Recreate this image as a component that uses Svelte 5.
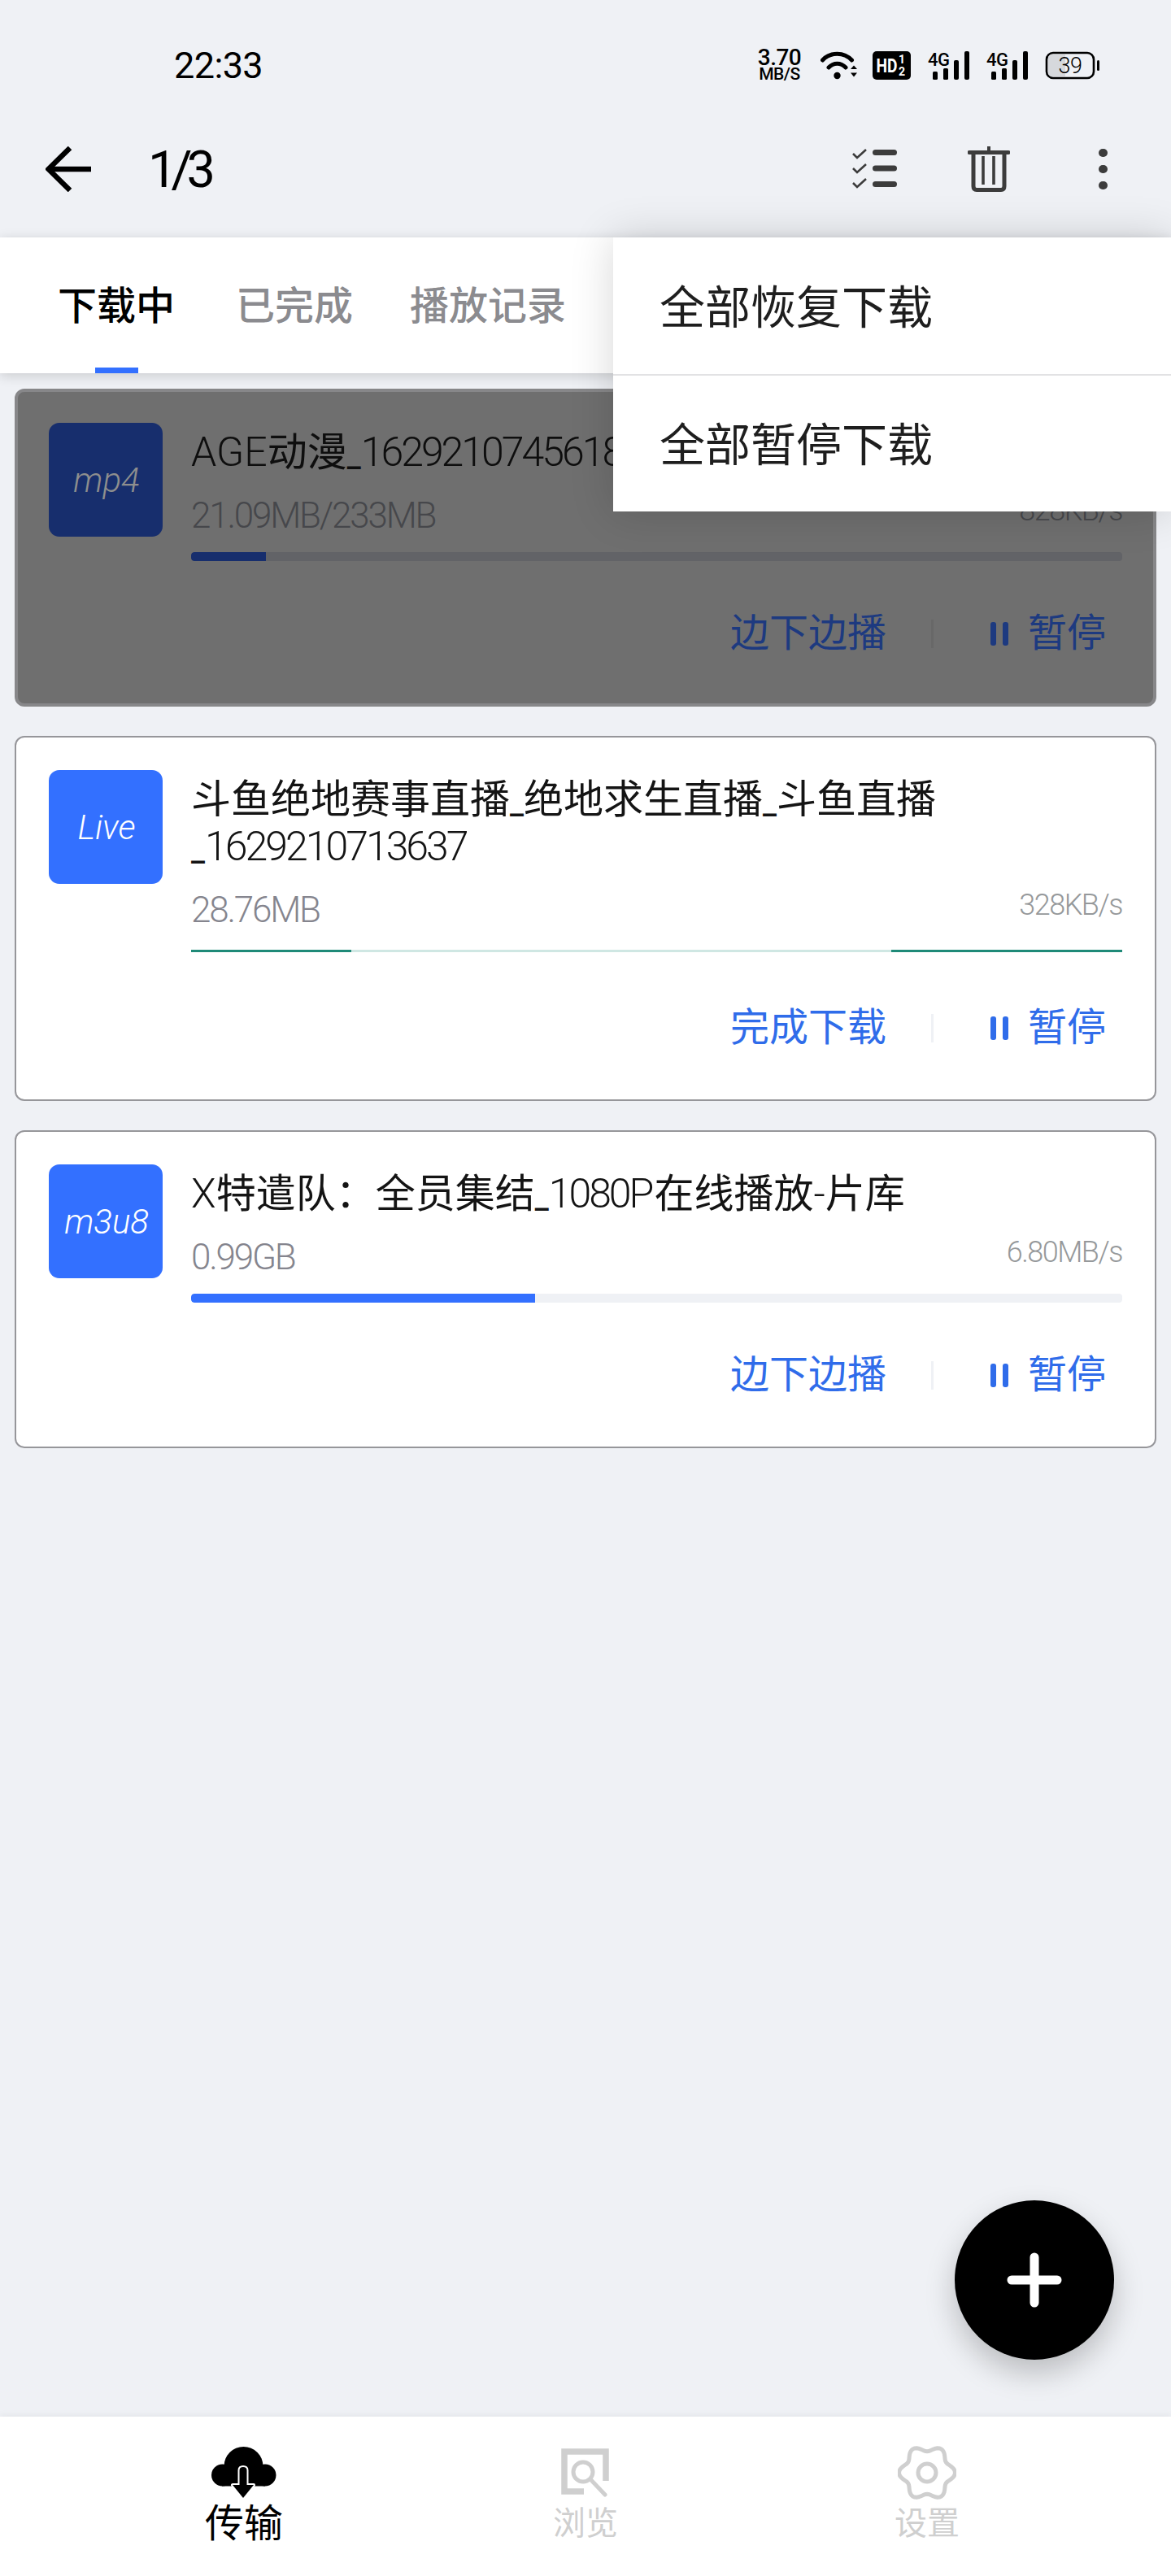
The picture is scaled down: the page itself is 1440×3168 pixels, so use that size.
<script>
  const cards = [
    { ext: 'mp4', pressed: true, size: '21.09MB/233MB', speed: '828KB/s', pct: 8, action: '边下边播',
      title: [['lat','AGE'],['cjk','动漫'],['us','_'],['num','1629210745618']] },
    { ext: 'Live', live: true, size: '28.76MB', speed: '328KB/s', action: '完成下载',
      title: [['cjk','斗鱼绝地赛事直播'],['us','_'],['cjk','绝地求生直播'],['us','_'],['cjk','斗鱼直播'],['us','_'],['num','1629210713637']] },
    { ext: 'm3u8', size: '0.99GB', speed: '6.80MB/s', pct: 36.9, action: '边下边播',
      title: [['lat','X'],['cjk','特遣队：全员集结'],['us','_'],['num','1080'],['lat','P'],['cjk','在线播放'],['lat','-'],['cjk','片库']] }
  ];
  const tabs = ['下载中', '已完成', '播放记录'];

  function gear() {
    let d = '';
    for (let i = 0; i < 96; i++) {
      const a = (i / 96) * Math.PI * 2;
      const r = 30 + 3.8 * Math.cos(6 * a);
      d += (i ? 'L' : 'M') + (36 + r * Math.cos(a) * 1.02).toFixed(2) + ' ' + (34 + r * Math.sin(a)).toFixed(2);
    }
    return d + 'Z';
  }
  const gearPath = gear();
</script>

<div class="page">
  <header class="status">
    <span class="time">22:33</span>
    <div class="indicators">
      <div class="speed"><span class="sp-n">3.70</span><span class="sp-u">MB/S</span></div>
      <svg class="wifi" width="46" height="35" viewBox="0 0 46 35" fill="none" stroke="#000">
        <path d="M2.5 11C12 0.5 29 0.5 38.5 11" stroke-width="5" stroke-linecap="round"/>
        <path d="M10 20C16 13.5 25 13.5 31 20" stroke-width="5" stroke-linecap="round"/>
        <circle cx="20.5" cy="30" r="4.2" fill="#000" stroke="none"/>
        <path d="M37 22L41 17.5L45 22ZM37 26.5H45L41 31.5Z" fill="#000" stroke="none"/>
      </svg>
      <svg class="hd" width="47" height="35" viewBox="0 0 47 35">
        <rect width="47" height="35" rx="5" fill="#000"/>
        <text x="4.5" y="26" font-size="24" font-weight="700" fill="#fff" textLength="26" lengthAdjust="spacingAndGlyphs">HD</text>
        <text x="32" y="15" font-size="14" font-weight="700" fill="#fff">1</text>
        <text x="32" y="30" font-size="14" font-weight="700" fill="#fff">2</text>
      </svg>
      {#each [0, 1] as s (s)}
        <svg class="sig" width="51" height="35" viewBox="0 0 51 35">
          <text x="0" y="17.5" font-size="22" font-weight="500" fill="#000" letter-spacing="-.5">4G</text>
          <rect x="6" y="25" width="6" height="10" rx="1.5"/>
          <rect x="19" y="21" width="6" height="14" rx="1.5"/>
          <rect x="32" y="11" width="6" height="24" rx="2"/>
          <rect x="45" y="0" width="6" height="35" rx="2"/>
        </svg>
      {/each}
      <svg class="batt" width="67" height="35" viewBox="0 0 67 35">
        <rect x="2" y="2" width="58" height="31" rx="8" fill="none" stroke="#000" stroke-width="2.6"/>
        <path d="M9 4H25V31H9Q4 31 4 26V9Q4 4 9 4Z" fill="#d6d8dc"/>
        <rect x="64" y="11" width="3" height="13" rx="1.5"/>
        <text x="31" y="27" font-size="27" font-weight="300" fill="#000" text-anchor="middle" letter-spacing="-.5">39</text>
      </svg>
    </div>
  </header>

  <div class="toolbar">
    <svg class="back" width="56" height="56" viewBox="0 0 56 56" fill="none" stroke="#000" stroke-width="6.5">
      <path d="M56 28H4"/><path d="M30 2L3.5 28L30 54"/>
    </svg>
    <h1>1/3</h1>
    <div class="tools">
      <svg class="list" width="55" height="50" viewBox="0 0 55 50" fill="none" stroke="#3c3c3c" stroke-width="2.6">
        <path d="M1 6L6 11L17 1"/><path d="M1 24L6 29L17 19"/><path d="M1 42L6 47L17 37"/>
        <g fill="#3c3c3c" stroke="none">
          <rect x="25" y="1" width="30" height="7" rx="3.5"/><rect x="25" y="20.5" width="30" height="7" rx="3.5"/><rect x="25" y="40" width="30" height="7" rx="3.5"/>
        </g>
      </svg>
      <svg class="trash" width="52" height="56" viewBox="0 0 52 56" fill="none" stroke="#3c3c3c">
        <path d="M26 0V6" stroke-width="4"/>
        <path d="M2 7.5H50" stroke-width="5" stroke-linecap="round"/>
        <path d="M7 8V49Q7 53.5 11 53.5H41Q45 53.5 45 49V8" stroke-width="5"/>
        <path d="M19 12V47M32 12V47" stroke-width="3.6"/>
      </svg>
      <div class="dots"><i></i><i></i><i></i></div>
    </div>
  </div>

  <nav class="tabs">
    {#each tabs as t, i (t)}
      <span class="tab" class:on={i === 0}>{t}</span>
    {/each}
  </nav>

  <main class="list-wrap">
    {#each cards as c (c.ext)}
      <article class="card" class:pressed={c.pressed}>
        <div class="thumb">{c.ext}</div>
        <div class="body">
          <div class="title">
            {#each c.title as [k, v]}<span class={k}>{v}</span>{/each}
          </div>
          <div class="meta">
            <span class="size">{c.size}</span>
            <span class="rate">{c.speed}</span>
          </div>
          {#if c.live}
            <div class="track live"><i class="l"></i><i class="r"></i></div>
          {:else}
            <div class="track"><i style="width:{c.pct}%"></i></div>
          {/if}
          <div class="actions">
            <span class="act">{c.action}</span>
            <span class="sep"></span>
            <svg width="22" height="29" viewBox="0 0 22 29" fill="currentColor" class="pause"><rect width="7" height="29" rx="3"/><rect x="15" width="7" height="29" rx="3"/></svg>
            <span class="act">暂停</span>
          </div>
        </div>
      </article>
    {/each}
  </main>

  <footer class="nav">
    <div class="item on">
      <svg width="80" height="64" viewBox="0 0 80 64">
        <circle cx="39.5" cy="24" r="24"/><circle cx="13.5" cy="35" r="13.5"/><circle cx="66" cy="35" r="13.5"/>
        <rect x="13" y="22" width="53" height="26.5"/>
        <path d="M34.5 29Q34.5 25 39 25Q43.5 25 43.5 29V47H52L39 63L26 47H34.5Z" stroke="#fff" stroke-width="4" stroke-linejoin="round" paint-order="stroke"/>
      </svg>
      <span>传输</span>
    </div>
    <div class="item">
      <svg width="60" height="60" viewBox="0 0 60 60" fill="none" stroke="#cfcfcf">
        <path d="M28 53H4V4H55V40" stroke-width="7.5"/>
        <circle cx="27" cy="29" r="12" stroke-width="5"/>
        <path d="M36 38L54 57" stroke-width="5" stroke-linecap="round"/>
      </svg>
      <span>浏览</span>
    </div>
    <div class="item">
      <svg width="72" height="68" viewBox="0 0 72 68" fill="none" stroke="#cfcfcf" stroke-width="5">
        <path d={gearPath} stroke-linejoin="round"/>
        <circle cx="36" cy="34" r="11"/>
      </svg>
      <span>设置</span>
    </div>
  </footer>

  <button class="fab" aria-label="add">
    <svg width="68" height="68" viewBox="0 0 68 68" stroke="#fff" stroke-width="11" stroke-linecap="round"><path d="M6 34H62M34 6V62"/></svg>
  </button>

  <ul class="menu">
    <li>全部恢复下载</li>
    <li>全部暂停下载</li>
  </ul>
</div>

<style>
  :global(body) { margin: 0; background: #eff1f5; }
  .page {
    position: relative; width: 1440px; height: 3168px; display: flex; flex-direction: column;
    background: #eff1f5; overflow: hidden;
    font-family: Roboto, "Noto Sans CJK SC", sans-serif; color: #000;
  }
  svg text { font-family: Roboto, sans-serif; }
  .sig { overflow: visible; }
  .status { height: 160px; display: flex; align-items: center; padding: 0 88px 0 214px; flex: none; }
  .time { font-size: 45px; letter-spacing: -.6px; line-height: 1; }
  .indicators { margin-left: auto; display: flex; align-items: center; gap: 21px; }
  .speed { display: flex; flex-direction: column; align-items: center; width: 53px; margin-right: 3px; font-weight: 500; }
  .sp-n { font-size: 28px; letter-spacing: -.5px; line-height: 23px; }
  .sp-u { font-size: 21px; letter-spacing: -.5px; line-height: 19px; }
  .wifi { margin-right: -3px; }

  .toolbar { height: 96px; display: flex; align-items: center; padding: 0 78.5px 0 56px; flex: none; }
  .back { margin-right: 70px; }
  h1 { margin: 0; font-size: 63px; font-weight: 400; letter-spacing: -7px; line-height: 1; }
  .tools { margin-left: auto; display: flex; align-items: center; }
  .trash { margin-left: 87px; }
  .dots { margin-left: 109px; display: flex; flex-direction: column; gap: 9.5px; }
  .dots i { width: 10.5px; height: 10.5px; border-radius: 50%; background: #3c3c3c; }

  .tabs {
    margin-top: 36px; height: 167px; flex: none; background: #fff; padding-left: 71px;
    display: grid; grid-template-columns: 219px 214px auto; align-items: center;
    font-size: 48px; font-weight: 500; color: #8b8b8f; box-shadow: 0 3px 14px rgba(0,0,0,.16);
    position: relative; z-index: 1;
  }
  .tab { position: relative; height: 167px; line-height: 170px; }
  .tab.on { color: #000; }
  .tab.on::after { content: ''; position: absolute; left: 46px; bottom: 0; width: 53px; height: 7px; background: #3370ff; }

  .list-wrap { padding: 19px 18px 0; display: flex; flex-direction: column; gap: 36px; }
  .card {
    box-sizing: border-box; background: #fff; border: 2px solid #96969a; border-radius: 12px;
    padding: 40px 40px 60px; display: flex; gap: 35px;
  }
  .thumb {
    flex: none; width: 140px; height: 140px; border-radius: 13px; background: #3370ff; color: #fff;
    display: flex; align-items: center; justify-content: center; font-size: 42px; font-style: italic; font-weight: 300;
    padding-left: 2px; box-sizing: border-box;
  }
  .body { flex: 1; min-width: 0; margin-top: 6px; }
  .title { font-size: 49px; line-height: 58px; color: #141414; padding-top: 2px; }
  .title span { font-weight: 400; line-height: 30px; }
  .title .lat { font-size: 50px; font-weight: 300; }
  .title .num { font-size: 50px; font-weight: 300; letter-spacing: -3px; }
  .title .us { font-size: 38px; font-weight: 500; }
  .meta { height: 93px; display: flex; justify-content: space-between; align-items: flex-start; font-weight: 300; }
  .size { margin-top: 24px; line-height: 48px; font-size: 44px; letter-spacing: -2.2px; color: #85858e; }
  .rate { margin-top: 20px; line-height: 45px; font-size: 36px; letter-spacing: -1.5px; color: #96999b; }
  .track { height: 11px; background: #eff1f5; border-radius: 4px; overflow: hidden; display: flex; }
  .track i { display: block; height: 100%; background: #3370ff; border-radius: 4px 0 0 4px; }
  .track.live {
    box-sizing: border-box; padding: 4px 0; background: #cfe7e3 content-box; border-radius: 0; justify-content: space-between;
  }
  .track.live i { border-radius: 0; background: #1f8a78; }
  .track.live .l { width: 197px; }
  .track.live .r { width: 284px; }
  .actions {
    margin-top: 61px; height: 56px; padding-right: 20px; display: flex; align-items: center; justify-content: flex-end;
    font-size: 48px; line-height: 56px; color: #2f6cea;
  }
  .sep { width: 3px; height: 35px; background: #eff1f5; margin: 0 70px 0 55px; }
  .pause { margin-right: 24px; color: #2f6cea; }

  .card.pressed { background: #6f6f6f; border: 4px solid #878789; padding: 38px 38px 58px; }
  .pressed .thumb { background: #172e6d; color: #8e8e8e; }
  .pressed .title { color: #0e0e0e; }
  .pressed .size { color: #46474b; }
  .pressed .rate { color: #46474b; }
  .pressed .track { background: #626367; }
  .pressed .track i { background: #172e6d; }
  .pressed .actions, .pressed .pause { color: #1d3a80; }
  .pressed .sep { background: #686868; }

  .nav {
    margin-top: auto; flex: none; height: 196px; box-sizing: border-box; background: #fff;
    padding: 34px 0 0 90px; display: grid; grid-template-columns: repeat(3, 420px);
    box-shadow: 0 -2px 8px rgba(0,0,0,.05); color: #cfcfcf; font-size: 40px;
  }
  .item { display: flex; flex-direction: column; align-items: center; }
  .item svg { display: block; height: 70px; }
  .item span { line-height: 56px; }
  .item.on { color: #000; font-size: 48px; }

  .fab {
    position: absolute; left: 1174px; top: 2706px; width: 196px; height: 196px; border: 0; padding: 0; border-radius: 50%;
    background: #000; display: flex; align-items: center; justify-content: center;
    box-shadow: 0 16px 36px rgba(0,0,0,.22);
  }
  .menu {
    position: absolute; left: 754px; right: 0; top: 292px; margin: 0; padding: 0; list-style: none; background: #fff; z-index: 2;
    box-shadow: 0 0 50px rgba(0,0,0,.16); font-size: 56px; color: #1e1e1e;
  }
  .menu li { box-sizing: border-box; height: 168px; line-height: 174px; padding-left: 57px; }
  .menu li + li { height: 169px; border-top: 2px solid #e2e2e4; line-height: 172px; }
</style>
